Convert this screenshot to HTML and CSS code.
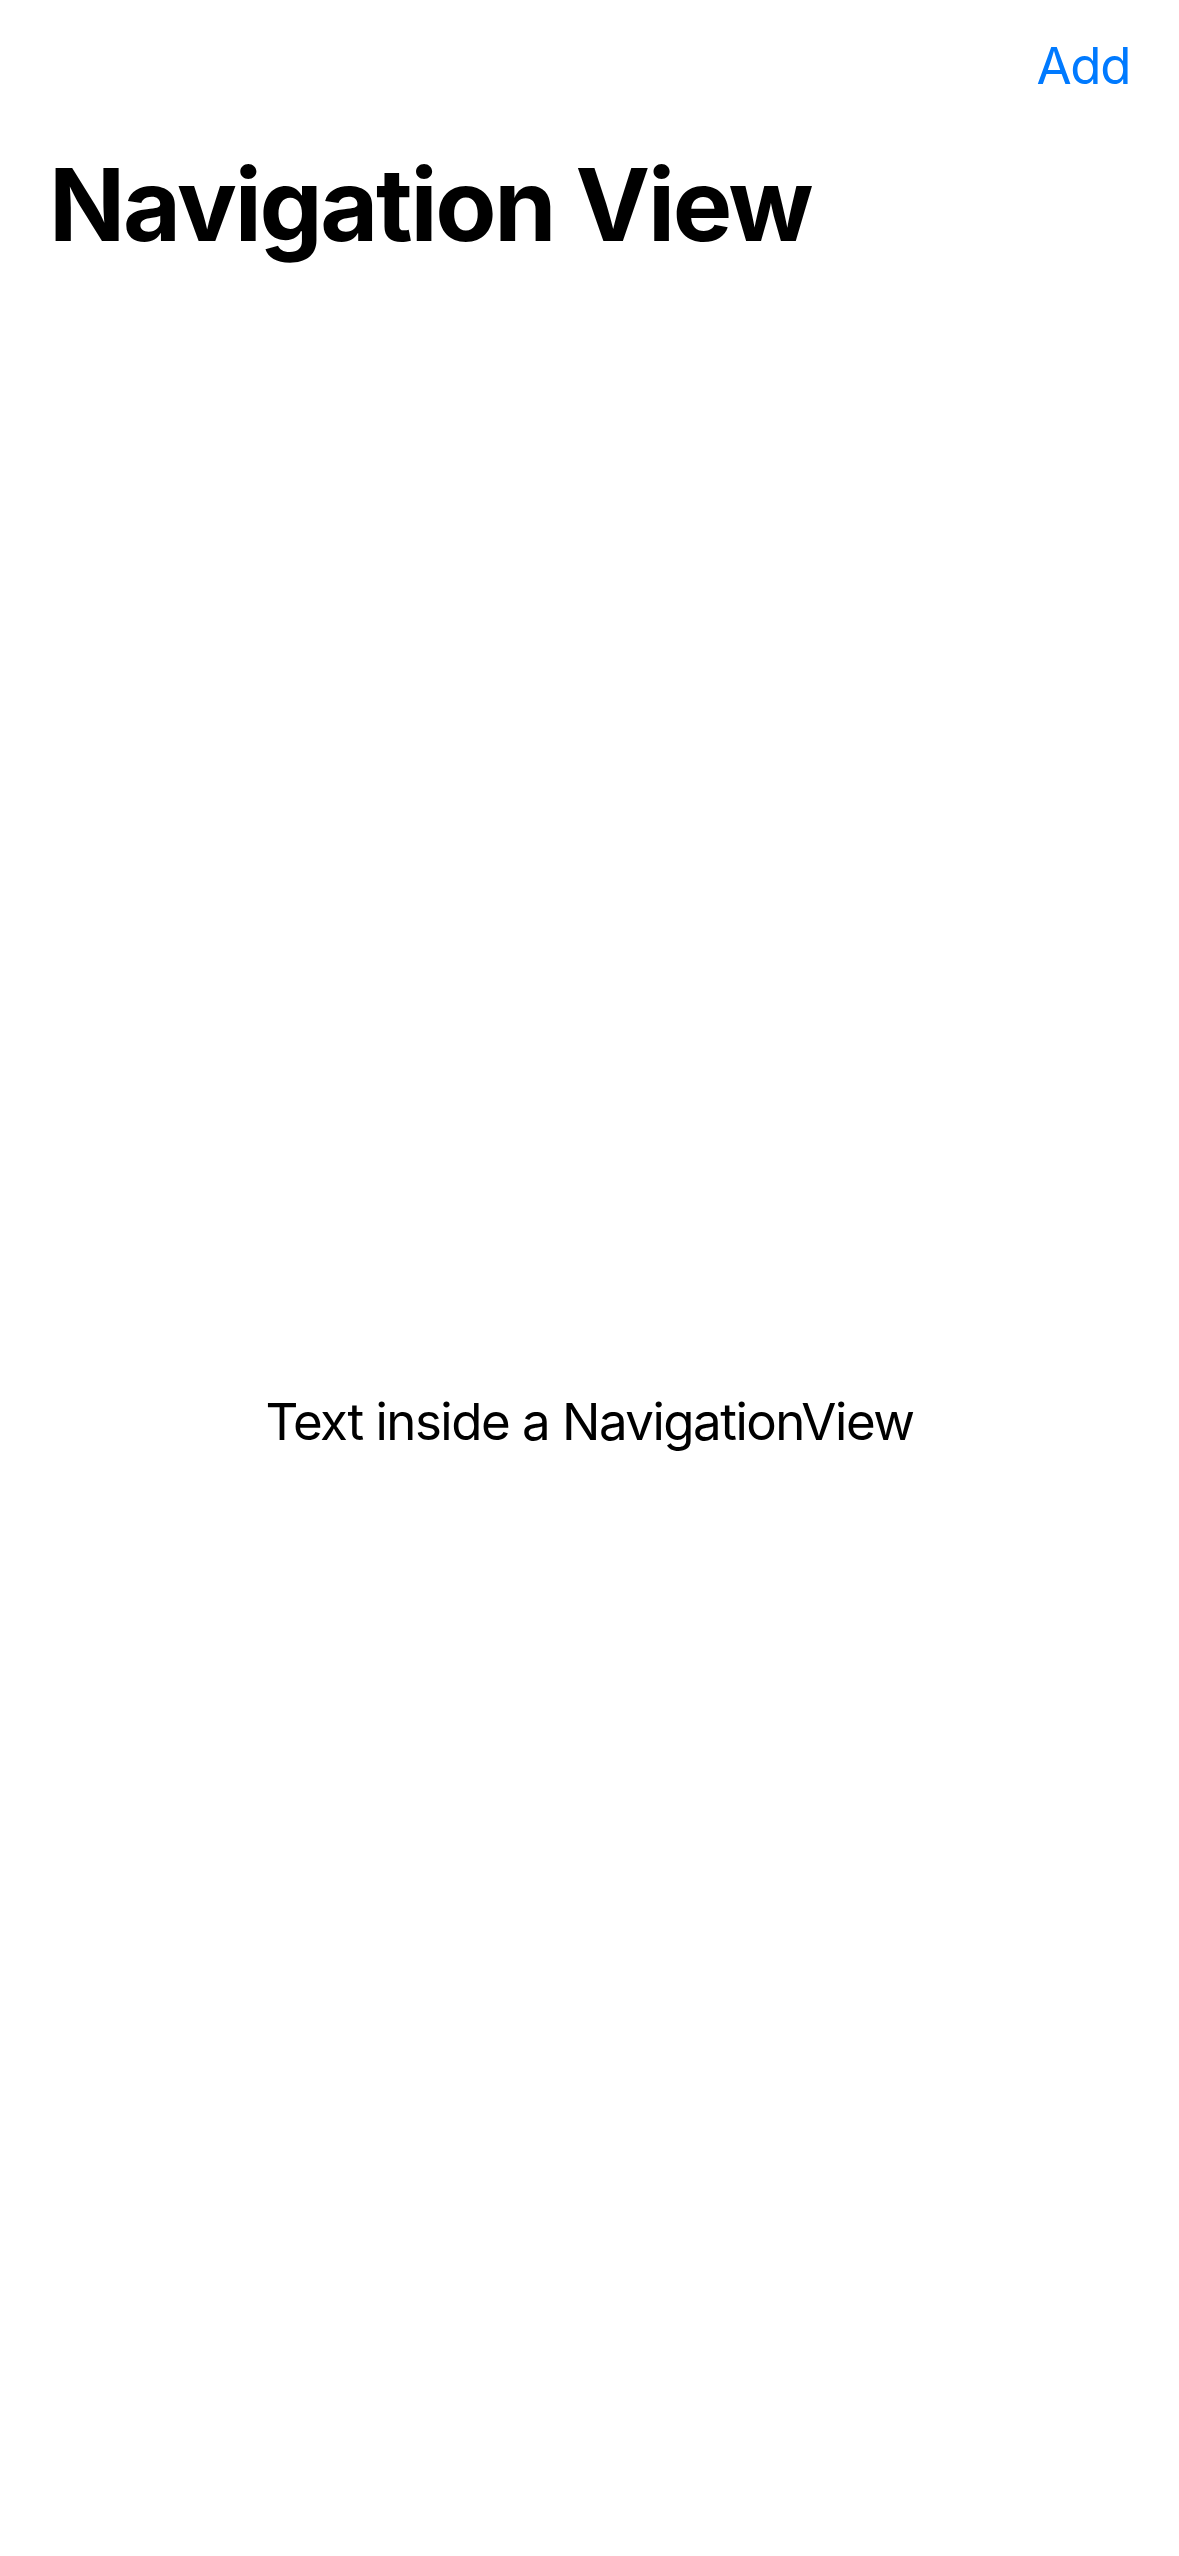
FILE: index.html
```html
<!DOCTYPE html>
<html>
<head>
<meta charset="utf-8">
<link rel="stylesheet" href="styles.css">
</head>
<body>
<div class="screen">
  <header class="nav">
    <div class="toolbar"><span class="add">Add</span></div>
    <h1 class="title">Navigation View</h1>
  </header>
  <main class="content">
    <p class="text">Text inside a NavigationView</p>
  </main>
</div>
</body>
</html>
```
FILE: styles.css
```css
html, body {
  margin: 0;
  padding: 0;
  background: #ffffff;
}
.screen {
  width: 1179px;
  height: 2556px;
  display: flex;
  flex-direction: column;
  font-family: Inter, "Liberation Sans", sans-serif;
  color: #000;
}
.nav {
  padding: 36px 49px 0 49px;
}
.toolbar {
  display: flex;
  justify-content: flex-end;
  height: 60px;
}
.add {
  font-size: 51px;
  line-height: 60px;
  color: #007aff;
  letter-spacing: -1.4px;
}
.title {
  margin: 49px 0 0 0;
  font-size: 100px;
  line-height: 120px;
  font-weight: 700;
  letter-spacing: -2.3px;
}
.content {
  flex: 1;
  display: flex;
  align-items: center;
  justify-content: center;
  padding-top: 23px;
}
.text {
  margin: 0;
  font-size: 51px;
  line-height: 60px;
  letter-spacing: -1.5px;
}
```
